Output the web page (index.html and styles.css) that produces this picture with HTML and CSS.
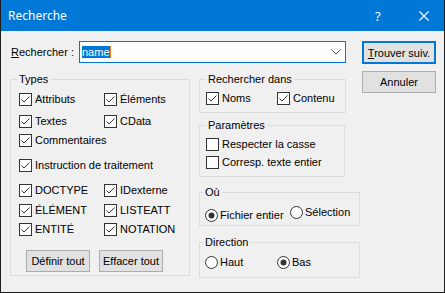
FILE: index.html
```html
<!DOCTYPE html>
<html lang="fr">
<head>
<meta charset="utf-8">
<title>Recherche</title>
<link rel="stylesheet" href="styles.css">
</head>
<body>
<div class="window">
  <div class="titlebar">
    <span class="title">Recherche</span>
    <span class="help">?</span>
    <svg class="close" width="10" height="10" viewBox="0 0 10 10"><path d="M0.5 0.5 L9.5 9.5 M9.5 0.5 L0.5 9.5" stroke="#fff" stroke-width="1.1" fill="none"/></svg>
  </div>
  <div class="body">
    <div class="main">
      <div class="search-row">
        <span class="search-label"><u>R</u>echercher :</span>
        <div class="combo">
          <span class="sel">name</span><span class="caret"></span>
          <svg class="chevron" width="10" height="6" viewBox="0 0 10 6"><path d="M0.5 0.5 L5 5 L9.5 0.5" stroke="#555" stroke-width="1" fill="none"/></svg>
        </div>
      </div>
      <div class="groups">
        <fieldset class="types">
          <legend>Types</legend>
          <div class="row">
            <label class="chk col1"><svg class="box" width="13" height="13" viewBox="0 0 13 13"><rect x="0.5" y="0.5" width="12" height="12" fill="#fff" stroke="#333"/><path d="M2.5 6.5 L5 9 L10.5 3.5" stroke="#333" stroke-width="1" fill="none"/></svg><span>Attributs</span></label>
            <label class="chk"><svg class="box" width="13" height="13" viewBox="0 0 13 13"><rect x="0.5" y="0.5" width="12" height="12" fill="#fff" stroke="#333"/><path d="M2.5 6.5 L5 9 L10.5 3.5" stroke="#333" stroke-width="1" fill="none"/></svg><span>Éléments</span></label>
          </div>
          <div class="row">
            <label class="chk col1"><svg class="box" width="13" height="13" viewBox="0 0 13 13"><rect x="0.5" y="0.5" width="12" height="12" fill="#fff" stroke="#333"/><path d="M2.5 6.5 L5 9 L10.5 3.5" stroke="#333" stroke-width="1" fill="none"/></svg><span>Textes</span></label>
            <label class="chk"><svg class="box" width="13" height="13" viewBox="0 0 13 13"><rect x="0.5" y="0.5" width="12" height="12" fill="#fff" stroke="#333"/><path d="M2.5 6.5 L5 9 L10.5 3.5" stroke="#333" stroke-width="1" fill="none"/></svg><span>CData</span></label>
          </div>
          <div class="row">
            <label class="chk"><svg class="box" width="13" height="13" viewBox="0 0 13 13"><rect x="0.5" y="0.5" width="12" height="12" fill="#fff" stroke="#333"/><path d="M2.5 6.5 L5 9 L10.5 3.5" stroke="#333" stroke-width="1" fill="none"/></svg><span>Commentaires</span></label>
          </div>
          <div class="row">
            <label class="chk"><svg class="box" width="13" height="13" viewBox="0 0 13 13"><rect x="0.5" y="0.5" width="12" height="12" fill="#fff" stroke="#333"/><path d="M2.5 6.5 L5 9 L10.5 3.5" stroke="#333" stroke-width="1" fill="none"/></svg><span>Instruction de traitement</span></label>
          </div>
          <div class="row">
            <label class="chk col1"><svg class="box" width="13" height="13" viewBox="0 0 13 13"><rect x="0.5" y="0.5" width="12" height="12" fill="#fff" stroke="#333"/><path d="M2.5 6.5 L5 9 L10.5 3.5" stroke="#333" stroke-width="1" fill="none"/></svg><span>DOCTYPE</span></label>
            <label class="chk"><svg class="box" width="13" height="13" viewBox="0 0 13 13"><rect x="0.5" y="0.5" width="12" height="12" fill="#fff" stroke="#333"/><path d="M2.5 6.5 L5 9 L10.5 3.5" stroke="#333" stroke-width="1" fill="none"/></svg><span>IDexterne</span></label>
          </div>
          <div class="row">
            <label class="chk col1"><svg class="box" width="13" height="13" viewBox="0 0 13 13"><rect x="0.5" y="0.5" width="12" height="12" fill="#fff" stroke="#333"/><path d="M2.5 6.5 L5 9 L10.5 3.5" stroke="#333" stroke-width="1" fill="none"/></svg><span>ÉLÉMENT</span></label>
            <label class="chk"><svg class="box" width="13" height="13" viewBox="0 0 13 13"><rect x="0.5" y="0.5" width="12" height="12" fill="#fff" stroke="#333"/><path d="M2.5 6.5 L5 9 L10.5 3.5" stroke="#333" stroke-width="1" fill="none"/></svg><span>LISTEATT</span></label>
          </div>
          <div class="row">
            <label class="chk col1"><svg class="box" width="13" height="13" viewBox="0 0 13 13"><rect x="0.5" y="0.5" width="12" height="12" fill="#fff" stroke="#333"/><path d="M2.5 6.5 L5 9 L10.5 3.5" stroke="#333" stroke-width="1" fill="none"/></svg><span>ENTITÉ</span></label>
            <label class="chk"><svg class="box" width="13" height="13" viewBox="0 0 13 13"><rect x="0.5" y="0.5" width="12" height="12" fill="#fff" stroke="#333"/><path d="M2.5 6.5 L5 9 L10.5 3.5" stroke="#333" stroke-width="1" fill="none"/></svg><span>NOTATION</span></label>
          </div>
          <div class="type-buttons">
            <button class="btn small">Définir tout</button>
            <button class="btn small">Effacer tout</button>
          </div>
        </fieldset>
        <div class="right-col">
          <fieldset class="grp in-grp">
            <legend>Rechercher dans</legend>
            <div class="row">
              <label class="chk col-noms"><svg class="box" width="13" height="13" viewBox="0 0 13 13"><rect x="0.5" y="0.5" width="12" height="12" fill="#fff" stroke="#333"/><path d="M2.5 6.5 L5 9 L10.5 3.5" stroke="#333" stroke-width="1" fill="none"/></svg><span>Noms</span></label>
              <label class="chk"><svg class="box" width="13" height="13" viewBox="0 0 13 13"><rect x="0.5" y="0.5" width="12" height="12" fill="#fff" stroke="#333"/><path d="M2.5 6.5 L5 9 L10.5 3.5" stroke="#333" stroke-width="1" fill="none"/></svg><span>Contenu</span></label>
            </div>
          </fieldset>
          <fieldset class="grp params">
            <legend>Paramètres</legend>
            <label class="chk"><svg class="box" width="13" height="13" viewBox="0 0 13 13"><rect x="0.5" y="0.5" width="12" height="12" fill="#fff" stroke="#333"/></svg><span>Respecter la casse</span></label>
            <label class="chk second"><svg class="box" width="13" height="13" viewBox="0 0 13 13"><rect x="0.5" y="0.5" width="12" height="12" fill="#fff" stroke="#333"/></svg><span>Corresp. texte entier</span></label>
          </fieldset>
          <fieldset class="grp radio-grp where">
            <legend>Où</legend>
            <div class="row where-row">
              <label class="rad col-fichier"><svg class="box" width="13" height="13" viewBox="0 0 13 13"><circle cx="6.5" cy="6.5" r="6" fill="#fff" stroke="#333"/><circle cx="6.5" cy="6.5" r="3" fill="#333"/></svg><span>Fichier entier</span></label>
              <label class="rad"><svg class="box" width="13" height="13" viewBox="0 0 13 13"><circle cx="6.5" cy="6.5" r="6" fill="#fff" stroke="#333"/></svg><span>Sélection</span></label>
            </div>
          </fieldset>
          <fieldset class="grp radio-grp direction">
            <legend>Direction</legend>
            <div class="row">
              <label class="rad col-haut"><svg class="box" width="13" height="13" viewBox="0 0 13 13"><circle cx="6.5" cy="6.5" r="6" fill="#fff" stroke="#333"/></svg><span>Haut</span></label>
              <label class="rad"><svg class="box" width="13" height="13" viewBox="0 0 13 13"><circle cx="6.5" cy="6.5" r="6" fill="#fff" stroke="#333"/><circle cx="6.5" cy="6.5" r="3" fill="#333"/></svg><span>Bas</span></label>
            </div>
          </fieldset>
        </div>
      </div>
    </div>
    <div class="buttons">
      <button class="btn default"><u>T</u>rouver suiv.</button>
      <button class="btn">Annuler</button>
    </div>
  </div>
</div>
</body>
</html>
```
FILE: styles.css
```css
* { box-sizing: border-box; }
html, body { margin: 0; padding: 0; }
body {
  width: 445px;
  height: 293px;
  overflow: hidden;
  background: #f0f0f0;
  font-family: "Liberation Sans", Arial, sans-serif;
  font-size: 11px;
  color: #000;
}
.window {
  width: 445px;
  height: 293px;
  border: 1px solid #1e1e1e;
  border-top: none;
  display: flex;
  flex-direction: column;
  background: #f0f0f0;
}
.titlebar {
  height: 31px;
  flex: none;
  background: #0078d7;
  color: #fff;
  display: flex;
  align-items: center;
}
.title {
  flex: 1;
  padding-left: 7px;
  font-family: "Noto Sans", "Liberation Sans", sans-serif;
  font-size: 12px;
}
.help {
  font-family: "Noto Sans", "Liberation Sans", sans-serif;
  font-size: 13px;
  width: 7px;
  margin-right: 37px;
}
.close { margin-right: 15px; display: block; }

.body {
  display: flex;
  padding: 10px 0 0 9px;
}
.main { width: 352px; flex: none; }
.search-row {
  display: flex;
  align-items: center;
  height: 22px;
}
.search-label { width: 69px; padding-left: 1px; }
.combo {
  width: 267px;
  height: 22px;
  border: 1px solid #0078d7;
  background: #fff;
  display: flex;
  align-items: center;
  padding-left: 2px;
}
.sel {
  background: #0078d7;
  color: #fff;
  line-height: 12px;
  height: 12px;
}
.caret {
  width: 1px;
  height: 12px;
  background: #f08020;
}
.chevron { margin-left: auto; margin-right: 4px; display: block; }

.buttons {
  display: flex;
  flex-direction: column;
  gap: 7px;
}
.btn {
  width: 74px;
  height: 22px;
  padding: 0;
  border: 1px solid #adadad;
  background: #e1e1e1;
  font-family: "Liberation Sans", Arial, sans-serif;
  font-size: 11px;
  color: #000;
}
.btn.default {
  height: 23px;
  border: 2px solid #0078d7;
}

.groups {
  display: flex;
  gap: 9px;
  margin-top: 9px;
  align-items: flex-start;
}
fieldset {
  margin: 0;
  min-width: 0;
  border: 1px solid #dcdcdc;
}
legend {
  padding: 0 2px;
  line-height: 15px;
}
.types {
  width: 180px;
  padding: 6px 0 3px 8px;
}
.types legend { margin-left: -2px; }
.types .row:nth-of-type(2) { margin-top: 9px; }
.types .row:nth-of-type(3) { margin-top: 6px; }
.types .row:nth-of-type(4) { margin-top: 12px; }
.types .row:nth-of-type(5) { margin-top: 12px; }
.types .row:nth-of-type(6) { margin-top: 7px; }
.types .row:nth-of-type(7) { margin-top: 6px; }

.row { display: flex; }
.chk, .rad {
  display: flex;
  align-items: center;
  gap: 3px;
  height: 13px;
  line-height: 13px;
  white-space: nowrap;
}
.rad { gap: 2px; }
.box { display: block; flex: none; }
.col1 { width: 85px; }

.type-buttons {
  display: flex;
  gap: 9px;
  margin-top: 14px;
  padding-left: 7px;
}
.btn.small { width: 64px; height: 22px; }

.right-col { display: flex; flex-direction: column; }
.grp { padding: 5px 0 7px 6px; }
.grp legend { margin-left: 0; }
.in-grp { width: 147px; }
.col-noms { width: 71px; }
.params { width: 146px; margin-top: 5px; }
.params .second { margin-top: 5px; }
.radio-grp { width: 161px; padding-left: 5px; }
.radio-grp legend { margin-left: -2px; }
.where { margin-top: 8px; padding-top: 6px; padding-bottom: 3px; }
.where-row { align-items: flex-start; }
.col-fichier { width: 85px; margin-top: 3px; }
.direction { margin-top: 9px; padding-top: 6px; padding-bottom: 8px; }
.col-haut { width: 72px; }
```
